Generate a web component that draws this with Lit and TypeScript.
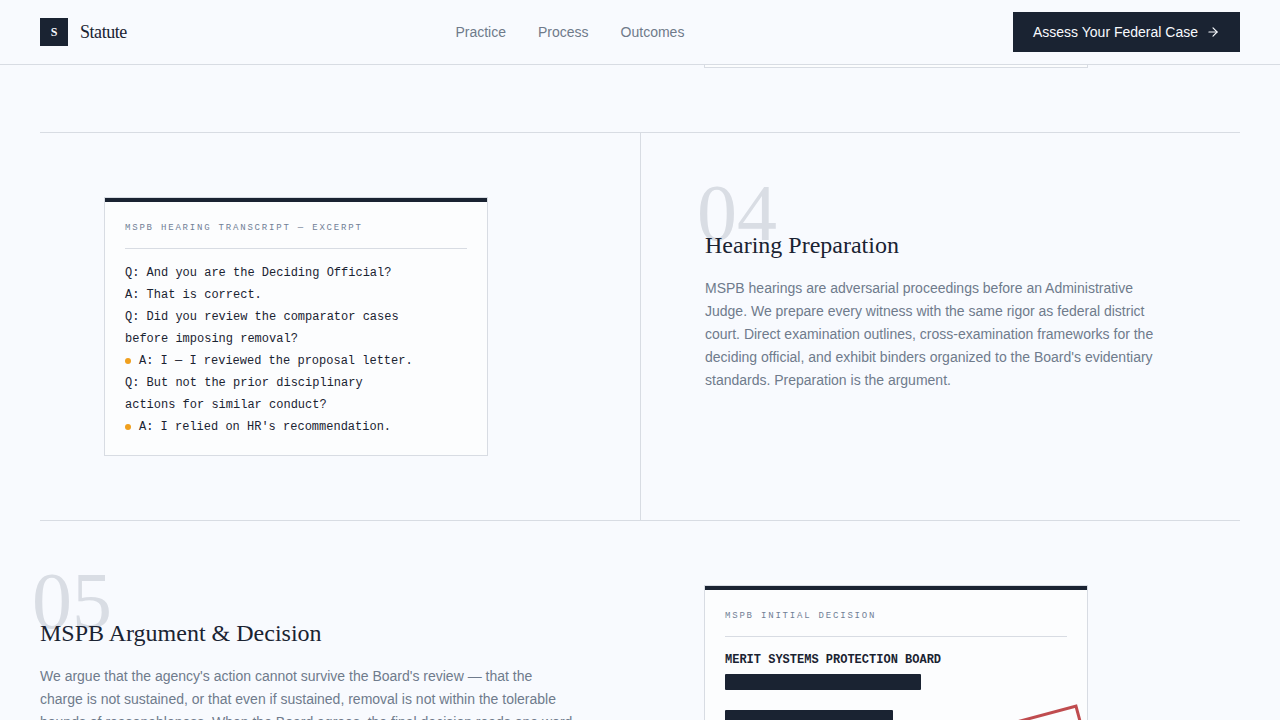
import { LitElement, html, css, svg } from "lit";
import { customElement, property } from "lit/decorators.js";

interface TranscriptLine {
  text: string;
  flagged?: boolean;
}

const NAV = ["Practice", "Process", "Outcomes"];

const TRANSCRIPT: TranscriptLine[] = [
  { text: "Q: And you are the Deciding Official?" },
  { text: "A: That is correct." },
  { text: "Q: Did you review the comparator cases" },
  { text: "before imposing removal?" },
  { text: "A: I — I reviewed the proposal letter.", flagged: true },
  { text: "Q: But not the prior disciplinary" },
  { text: "actions for similar conduct?" },
  { text: "A: I relied on HR's recommendation.", flagged: true },
];

const arrowRight = svg`
  <path d="M5 12h14" />
  <path d="m12 5 7 7-7 7" />
`;

@customElement("site-header")
export class SiteHeader extends LitElement {
  static styles = css`
    :host {
      display: block;
      background: #f8fafe;
      border-bottom: 1px solid #d8dce3;
    }
    .bar {
      display: flex;
      align-items: center;
      justify-content: space-between;
      height: 64px;
      padding: 0 40px;
    }
    a {
      text-decoration: none;
    }
    .brand {
      display: flex;
      align-items: center;
      gap: 12px;
      color: #1a2332;
      font: 18px/28px "Liberation Serif", serif;
      letter-spacing: -0.025em;
    }
    .mark {
      display: grid;
      place-items: center;
      width: 28px;
      height: 28px;
      background: #1a2332;
      color: #f8fafe;
      font-size: 12px;
      font-weight: 700;
      letter-spacing: normal;
    }
    .nav {
      display: flex;
      gap: 32px;
    }
    .link {
      color: #6f7a8a;
      font-size: 14px;
      line-height: 20px;
    }
    .cta {
      display: flex;
      align-items: center;
      gap: 8px;
      padding: 10px 20px;
      border: 0;
      background: #1a2332;
      color: #f8fafe;
      font: 14px/20px "Liberation Sans", sans-serif;
      cursor: pointer;
    }
    .arrow {
      width: 14px;
      height: 14px;
      fill: none;
      stroke: currentColor;
      stroke-width: 2;
      stroke-linecap: round;
      stroke-linejoin: round;
    }
  `;

  render() {
    return html`
      <header class="bar">
        <a class="brand" href="#top"><span class="mark">S</span><span>Statute</span></a>
        <nav class="nav">
          ${NAV.map((n) => html`<a class="link" href="#${n.toLowerCase()}">${n}</a>`)}
        </nav>
        <button class="cta" type="button">
          Assess Your Federal Case
          <svg class="arrow" viewBox="0 0 24 24" aria-hidden="true">${arrowRight}</svg>
        </button>
      </header>
    `;
  }
}

@customElement("case-document")
export class CaseDocument extends LitElement {
  @property() heading = "";

  static styles = css`
    :host {
      display: block;
      box-sizing: border-box;
      position: relative;
      max-width: 384px;
      border: 1px solid #d8dce3;
      background: #fcfdfe;
      color: #1a2332;
      font: 12px/22px "Liberation Mono", monospace;
    }
    .sheet {
      border-top: 4px solid #1a2332;
      padding: 20px 20px 17px;
    }
    .title {
      margin: 0 0 13px;
      padding-bottom: 14px;
      border-bottom: 1px solid #d8dce3;
      color: #718096;
      font-size: 9px;
      font-weight: 400;
      line-height: 12px;
      letter-spacing: 0.2em;
      text-transform: uppercase;
    }
  `;

  render() {
    return html`
      <div class="sheet">
        <h4 class="title">${this.heading}</h4>
        <slot></slot>
      </div>
    `;
  }
}

@customElement("step-copy")
export class StepCopy extends LitElement {
  @property() number = "";
  @property() heading = "";

  static styles = css`
    :host {
      display: block;
      position: relative;
      padding-top: 32px;
    }
    .number {
      position: absolute;
      top: -24px;
      left: -8px;
      color: #d9dde4;
      font: 80px/80px "Liberation Serif", serif;
    }
    .heading {
      position: relative;
      margin: 0 0 16px;
      color: #1a2332;
      font: 24px/32px "Liberation Serif", serif;
    }
    .body {
      margin: 0;
      color: #6f7b8c;
      font-size: 14px;
      line-height: 23px;
    }
  `;

  render() {
    return html`
      <span class="number" aria-hidden="true">${this.number}</span>
      <h3 class="heading">${this.heading}</h3>
      <p class="body"><slot></slot></p>
    `;
  }
}

@customElement("app-root")
export class AppRoot extends LitElement {
  static styles = css`
    :host {
      display: flex;
      flex-direction: column;
      height: 100vh;
      overflow: hidden;
      background: #f8fafe;
      font-family: "Liberation Sans", sans-serif;
    }
    .steps {
      flex: 1;
      min-height: 0;
      overflow: hidden;
      padding: 0 40px;
    }
    .step {
      display: grid;
      grid-template-columns: 1fr 1fr;
      border-top: 1px solid #d8dce3;
    }
    .step.previous {
      border-top: 0;
    }
    .cell {
      padding: 64px;
    }
    .cell.ruled {
      border-left: 1px solid #d8dce3;
    }
    .cell.flush {
      padding-left: 0;
    }
    .cell.tail {
      grid-column: 2;
      padding-top: 0;
    }
    .sheet-end {
      box-sizing: border-box;
      max-width: 384px;
      height: 3px;
      border: 1px solid #d8dce3;
      border-top: 0;
      background: #fcfdfe;
    }
    .flag {
      display: inline-block;
      width: 6px;
      height: 6px;
      margin-right: 8px;
      border-radius: 50%;
      background: #f0a01e;
      vertical-align: middle;
    }
    .board {
      display: block;
      line-height: 20px;
    }
    .redacted {
      height: 16px;
      margin: 4px 0 20px;
      border-radius: 1px;
      background: #1a2332;
    }
    .redacted.wide {
      width: 196px;
    }
    .redacted.narrow {
      width: 168px;
    }
    .stamp {
      position: absolute;
      right: 0;
      top: 138px;
      box-sizing: border-box;
      width: 160px;
      height: 56px;
      border: 3px solid #b8383c;
      opacity: 0.9;
      transform: rotate(-15deg);
    }
  `;

  render() {
    return html`
      <site-header></site-header>
      <main class="steps">
        <section class="step previous">
          <div class="cell tail"><div class="sheet-end"></div></div>
        </section>

        <section class="step">
          <div class="cell">
            <case-document heading="MSPB Hearing Transcript — Excerpt">
              ${TRANSCRIPT.map(
                (l) => html`<div>${l.flagged ? html`<span class="flag"></span>` : ""}${l.text}</div>`
              )}
            </case-document>
          </div>
          <div class="cell ruled">
            <step-copy number="04" heading="Hearing Preparation"
              >MSPB hearings are adversarial proceedings before an Administrative Judge. We prepare
              every witness with the same rigor as federal district court. Direct examination
              outlines, cross-examination frameworks for the deciding official, and exhibit binders
              organized to the Board's evidentiary standards. Preparation is the argument.</step-copy
            >
          </div>
        </section>

        <section class="step">
          <div class="cell flush">
            <step-copy number="05" heading="MSPB Argument &amp; Decision"
              >We argue that the agency's action cannot survive the Board's review — that the charge
              is not sustained, or that even if sustained, removal is not within the tolerable
              bounds of reasonableness. When the Board agrees, the final decision reads one
              word</step-copy
            >
          </div>
          <div class="cell">
            <case-document heading="MSPB Initial Decision">
              <strong class="board">MERIT SYSTEMS PROTECTION BOARD</strong>
              <div class="redacted wide"></div>
              <div class="redacted narrow"></div>
              <div class="stamp"></div>
            </case-document>
          </div>
        </section>
      </main>
    `;
  }
}
